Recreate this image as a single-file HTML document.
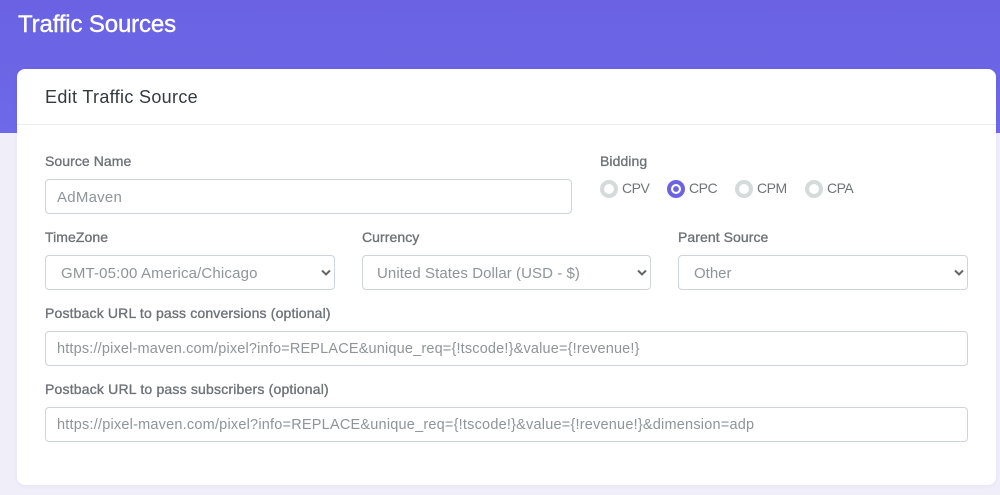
<!DOCTYPE html>
<html><head><meta charset="utf-8"><style>
html,body{margin:0;padding:0;width:1000px;height:495px;overflow:hidden;background:#f0eef9;font-family:"Liberation Sans",sans-serif}
.a{position:absolute;white-space:nowrap}
.hdr{left:0;top:0;width:1000px;height:133px;background:linear-gradient(#6a62e2,#6d69e8)}
.card{left:17px;top:69px;width:979px;height:416px;background:#fff;border-radius:8px;box-shadow:0 1px 4px rgba(80,70,180,.06)}
.line{left:17px;top:124px;width:979px;height:1px;background:#e9ebec}
.lb{font-size:14px;line-height:18px;color:#6f7378;-webkit-text-stroke:.35px #6f7378;letter-spacing:.07px}
.box{border:1px solid #ced4da;border-radius:4px;background:#fff;box-sizing:border-box;height:35px}
.tx{font-size:15px;line-height:20px;color:#8f9499}
.r{width:18px;height:18px;border-radius:50%;border:4px solid #d5dadb;box-sizing:border-box;background:#fff;top:180px}
.rt{font-size:14px;line-height:18px;color:#6f7378;top:179px;letter-spacing:-.5px}
</style></head><body>
<div class="a hdr"></div>
<div class="a" style="left:18px;top:11px;font-size:24px;line-height:28px;color:#fff;letter-spacing:-.14px;-webkit-text-stroke:.4px #fff">Traffic Sources</div>
<div class="a card"></div>
<div class="a line"></div>
<div class="a" style="left:45px;top:86px;font-size:18px;line-height:22px;color:#343a40;letter-spacing:.33px">Edit Traffic Source</div>

<div class="a lb" style="left:45px;top:152px">Source Name</div>
<div class="a box" style="left:45px;top:179px;width:527px"></div>
<div class="a tx" style="left:57px;top:188px;letter-spacing:.25px">AdMaven</div>

<div class="a lb" style="left:600px;top:152px">Bidding</div>
<div class="a r" style="left:600px"></div><div class="a rt" style="left:622px">CPV</div>
<div class="a r" style="left:667px;border:4px solid #6c63e0;background:radial-gradient(circle,#6c63e0 0,#6c63e0 2.5px,#fff 3.2px)"></div><div class="a rt" style="left:689px">CPC</div>
<div class="a r" style="left:735px"></div><div class="a rt" style="left:757px">CPM</div>
<div class="a r" style="left:805px"></div><div class="a rt" style="left:827px">CPA</div>

<div class="a lb" style="left:45px;top:228px">TimeZone</div>
<div class="a box" style="left:45px;top:255px;width:290px"></div>
<div class="a tx" style="left:61px;top:264px;letter-spacing:.16px">GMT-05:00 America/Chicago</div>
<svg class="a" style="left:321px;top:269px" width="10" height="7" viewBox="0 0 10 7"><path d="M1 1.5L5 5.5L9 1.5" fill="none" stroke="#666" stroke-width="2"/></svg>

<div class="a lb" style="left:362px;top:228px">Currency</div>
<div class="a box" style="left:362px;top:255px;width:289px"></div>
<div class="a tx" style="left:377px;top:264px;letter-spacing:.07px">United States Dollar (USD - $)</div>
<svg class="a" style="left:637px;top:269px" width="10" height="7" viewBox="0 0 10 7"><path d="M1 1.5L5 5.5L9 1.5" fill="none" stroke="#666" stroke-width="2"/></svg>

<div class="a lb" style="left:678px;top:228px">Parent Source</div>
<div class="a box" style="left:678px;top:255px;width:290px"></div>
<div class="a tx" style="left:694px;top:264px">Other</div>
<svg class="a" style="left:954px;top:269px" width="10" height="7" viewBox="0 0 10 7"><path d="M1 1.5L5 5.5L9 1.5" fill="none" stroke="#666" stroke-width="2"/></svg>

<div class="a lb" style="left:45px;top:304px;letter-spacing:.16px">Postback URL to pass conversions (optional)</div>
<div class="a box" style="left:45px;top:331px;width:923px"></div>
<div class="a tx" style="left:57px;top:339px;font-size:14.5px;letter-spacing:.17px">https://pixel-maven.com/pixel?info=REPLACE&amp;unique_req={!tscode!}&amp;value={!revenue!}</div>

<div class="a lb" style="left:45px;top:380px;letter-spacing:.19px">Postback URL to pass subscribers (optional)</div>
<div class="a box" style="left:45px;top:407px;width:923px"></div>
<div class="a tx" style="left:57px;top:415px;font-size:14.5px;letter-spacing:.21px">https://pixel-maven.com/pixel?info=REPLACE&amp;unique_req={!tscode!}&amp;value={!revenue!}&amp;dimension=adp</div>
</body></html>
